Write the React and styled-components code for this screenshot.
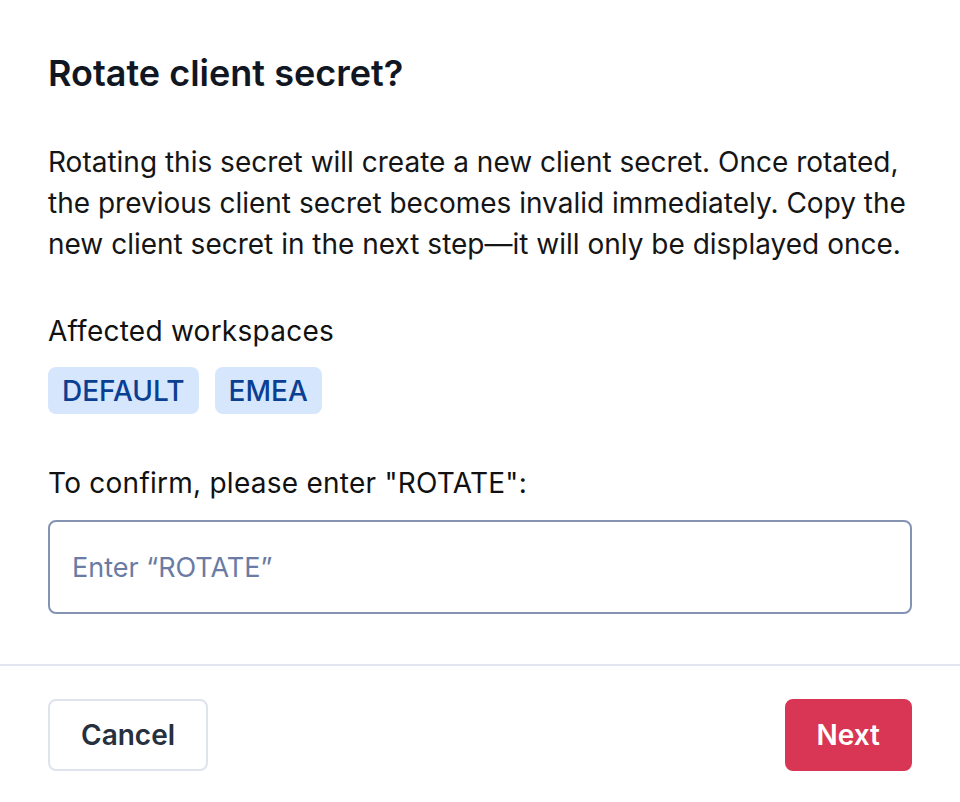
import React from "react";
import styled, { createGlobalStyle } from "styled-components";

const GlobalStyle = createGlobalStyle`
  html, body { margin: 0; padding: 0; background: #ffffff; }
  body { font-family: Inter, "Noto Sans", "Liberation Sans", sans-serif; -webkit-font-smoothing: antialiased; }
  * { box-sizing: border-box; }
`;

const Dialog = styled.div`
  width: 960px;
  min-height: 802px;
  background: #ffffff;
  display: flex;
  flex-direction: column;
`;

const Body = styled.div`
  padding: 48px 48px 0;
  display: flex;
  flex-direction: column;
`;

const Title = styled.h1`
  margin: 0;
  font-size: 36px;
  line-height: 50px;
  font-weight: 600;
  color: #111722;
`;

const Description = styled.p`
  margin: 44px 0 0;
  font-size: 28px;
  line-height: 41px;
  color: #151515;
  font-weight: 400;
`;

const Label = styled.div`
  margin-top: ${(p) => p.$mt}px;
  font-size: 28px;
  line-height: 36px;
  color: #111111;
  font-weight: 400;
  letter-spacing: 0.25px;
`;

const TagRow = styled.div`
  margin-top: 18px;
  display: flex;
  gap: 16px;
`;

const Tag = styled.span`
  display: inline-flex;
  align-items: center;
  height: 47px;
  padding: 0 14px;
  border-radius: 8px;
  background: #d5e6fd;
  color: #0b3f92;
  font-size: 28px;
  font-weight: 500;
`;

const Input = styled.input`
  margin-top: 19px;
  width: 100%;
  height: 94px;
  border: 2px solid #8493b4;
  border-radius: 8px;
  padding: 0 22px;
  font-family: inherit;
  font-size: 27px;
  color: #111;
  outline: none;
  &::placeholder {
    color: #6a7ca3;
  }
`;

const Divider = styled.hr`
  margin: 50px 0 0;
  border: 0;
  height: 2px;
  background: #e3e6f0;
`;

const Footer = styled.div`
  padding: 33px 48px 31px;
  display: flex;
  justify-content: space-between;
  align-items: center;
`;

const Button = styled.button`
  height: 72px;
  padding: 0 ${(p) => (p.$primary ? 30 : 31)}px;
  border-radius: 8px;
  font-family: inherit;
  font-size: 28px;
  font-weight: 600;
  cursor: pointer;
  border: 2px solid ${(p) => (p.$primary ? "#d83654" : "#dfe3ee")};
  background: ${(p) => (p.$primary ? "#d83654" : "#ffffff")};
  color: ${(p) => (p.$primary ? "#ffffff" : "#27303f")};
`;

export default function App() {
  return (
    <>
      <GlobalStyle />
      <Dialog>
        <Body>
          <Title>Rotate client secret?</Title>
          <Description>
            Rotating this secret will create a new client secret. Once rotated,
            the previous client secret becomes invalid immediately. Copy the new
            client secret in the next step—it will only be displayed once.
          </Description>
          <Label $mt={48}>Affected workspaces</Label>
          <TagRow>
            <Tag>DEFAULT</Tag>
            <Tag>EMEA</Tag>
          </TagRow>
          <Label $mt={51}>To confirm, please enter "ROTATE":</Label>
          <Input placeholder="Enter “ROTATE”" />
        </Body>
        <Divider />
        <Footer>
          <Button>Cancel</Button>
          <Button $primary>Next</Button>
        </Footer>
      </Dialog>
    </>
  );
}
